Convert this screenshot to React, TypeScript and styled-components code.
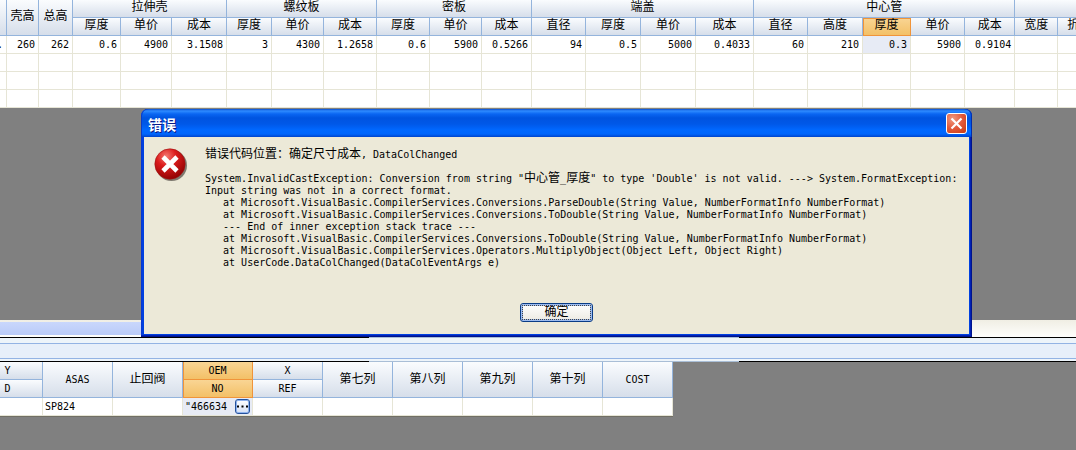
import React from 'react';
import styled, { createGlobalStyle, css } from 'styled-components';

const GlobalStyle = createGlobalStyle`
  * { box-sizing: border-box; }
  html, body { margin: 0; padding: 0; background: #808080; }
  body, button, table {
    font-family: "DejaVu Sans Mono", "Noto Sans CJK SC", monospace;
    font-size: 10px;
    color: #000;
  }
`;

const Page = styled.main`
  position: relative;
  display: flex;
  flex-direction: column;
  min-height: 100vh;
  overflow: hidden;
  background: #808080;
`;

const Han = styled.span`
  font-family: "Noto Sans CJK SC", sans-serif;
  font-size: 12px;
  line-height: 0;
`;

const UpperPane = styled.section`
  height: 320px;
  overflow: hidden;
`;

const Grid = styled.table<{ $shift?: number }>`
  table-layout: fixed;
  width: 0;
  margin-left: ${(p) => p.$shift ?? 0}px;
  border-collapse: separate;
  border-spacing: 0;
`;

const Head = styled.th<{ $active?: boolean; $raised?: boolean }>`
  height: 18px;
  padding: 0 0 ${(p) => (p.$raised ? 1 : 0)}px;
  font-weight: normal;
  line-height: 14px;
  text-align: center;
  white-space: nowrap;
  border-right: 1px solid #94b4dc;
  border-bottom: 1px solid #94b4dc;
  background: linear-gradient(#fafcfe, #d6deea);
  ${(p) =>
    p.$active &&
    css`
      background: linear-gradient(#f9d594, #f3c067);
      border-color: #f0943a;
      box-shadow: inset 1px ${p.$raised ? 1 : 0}px 0 #f0943a;
    `}
`;

const Cell = styled.td<{ $active?: boolean; $left?: boolean }>`
  height: 18px;
  padding: ${(p) => (p.$left ? '0 2px' : '0 3px')};
  line-height: 14px;
  text-align: ${(p) => (p.$left ? 'left' : 'right')};
  white-space: nowrap;
  border-right: 1px solid #e6e5d6;
  border-bottom: 1px solid #e6e5d6;
  background: ${(p) => (p.$active ? '#e7ebf5' : '#fff')};
`;

const CellEditor = styled.div`
  display: flex;
  align-items: center;
  justify-content: space-between;
`;

const MoreButton = styled.button`
  display: flex;
  align-items: center;
  justify-content: center;
  width: 15px;
  height: 15px;
  padding: 0;
  border: 1px solid #24519c;
  border-radius: 3px;
  background: linear-gradient(#fff, #d5e0f5);
  box-shadow: inset 0 0 0 1px #8fb3ee;
`;

const ScrollStrip = styled.div`
  display: flex;
  height: 17px;
  padding: 2px 0;
  background: linear-gradient(#f0eee4, #fefefc);
`;

const ScrollThumb = styled.div`
  width: 300px;
  background: linear-gradient(#c9d7fc, #bacbf8);
`;

const Rule = styled.div`
  height: 1px;
  background: linear-gradient(to right, #000 369px, #a9bed6 369px, #a9bed6 739px, #000 739px);
`;

const Splitter = styled.div`
  height: 23px;
  padding: 5px 0 2px;
  background: #edf4fa;
`;

const SplitterBar = styled.div`
  height: 16px;
  border-top: 1px solid #93b3e4;
  border-bottom: 1px solid #93b3e4;
  background: #e7effa;
`;

const LowerPane = styled.section`
  flex: 1;
  overflow: hidden;

  table {
    border-bottom: 1px solid #716f64;
  }
`;

const Dialog = styled.section`
  position: absolute;
  top: 109px;
  left: 141px;
  right: 104px;
  display: flex;
  flex-direction: column;
  padding: 0 3px 3px;
  border-radius: 7px 7px 0 0;
  background: #0040e0;
  box-shadow: inset -1px -1px 0 #00138c, inset -2px -2px 0 #0021b4, inset 1px 0 0 #0838d0;
`;

const TitleBar = styled.header`
  display: flex;
  align-items: center;
  justify-content: space-between;
  height: 28px;
  margin: 0 -3px;
  padding: 1px 5px 0 7px;
  border-radius: 7px 7px 0 0;
  background: linear-gradient(
    #0a4fd0 0,
    #2e8bff 2px,
    #0a66f2 5px,
    #0054e0 9px,
    #0058e8 15px,
    #0068ff 21px,
    #0066fc 25px,
    #0044cc 28px
  );
  box-shadow: inset 1px 0 0 #0a3cc8, inset -1px 0 0 #002cae;
`;

const Title = styled.h1`
  margin: 0;
  font-family: "Noto Sans CJK SC", sans-serif;
  font-size: 14px;
  font-weight: bold;
  line-height: 20px;
  color: #fff;
  text-shadow: 1px 1px 0 #0a1883;
`;

const CloseButton = styled.button`
  display: flex;
  align-items: center;
  justify-content: center;
  width: 21px;
  height: 21px;
  padding: 0;
  border: 1px solid #fff;
  border-radius: 3px;
  background: radial-gradient(circle at 30% 25%, #f09a80, #e2593a 50%, #c73a12);
`;

const Body = styled.div`
  display: flex;
  flex-direction: column;
  align-items: center;
  height: 197px;
  padding: 11px 10px 12px;
  background: #ece9d8;
`;

const Message = styled.div`
  display: flex;
  flex: 1;
  align-self: stretch;
  gap: 17px;
`;

const Trace = styled.pre`
  margin: 0;
  padding-top: 1px;
  font-family: "DejaVu Sans Mono", "Noto Sans CJK SC", monospace;
  font-size: 10px;
  line-height: 12px;
`;

const OkButton = styled.button`
  width: 73px;
  height: 19px;
  padding: 0;
  border: 1px solid #0a3c86;
  border-radius: 3px;
  background: linear-gradient(#fff, #eceae2);
  box-shadow: inset 0 0 0 2px #9dbcf0, inset 0 -2px 0 #6f98e4;
  line-height: 15px;
  outline: 1px dotted #444;
  outline-offset: -3px;
`;

const hanRun = /([\u3400-\u9fff\uff1a]+)/;

function Label({ text }: { text: string }) {
  return (
    <>
      {text.split(hanRun).map((part, i) => (hanRun.test(part) ? <Han key={i}>{part}</Han> : part))}
    </>
  );
}

const upperColumns = [
  37, 32, 34, 48, 51, 55, 45, 52, 53, 53, 52, 50, 54, 55, 55, 58, 54, 55, 48, 54, 50, 43, 43,
];

const groups = [
  { name: '拉伸壳', columns: ['厚度', '单价', '成本'] },
  { name: '螺纹板', columns: ['厚度', '单价', '成本'] },
  { name: '密板', columns: ['厚度', '单价', '成本'] },
  { name: '端盖', columns: ['直径', '厚度', '单价', '成本'] },
  { name: '中心管', columns: ['直径', '高度', '厚度', '单价', '成本'] },
  { name: '', columns: ['宽度', '折数'] },
];

const upperValues = [
  '.', '260', '262', '0.6', '4900', '3.1508', '3', '4300', '1.2658', '0.6', '5900', '0.5266',
  '94', '0.5', '5000', '0.4033', '60', '210', '0.3', '5900', '0.9104', '', '',
];

const activeColumn = 18;
const firstGroupedColumn = 3;

function CostGrid() {
  const subHeads = groups.flatMap((g) => g.columns);
  const emptyRows = [0, 1, 2];
  return (
    <Grid $shift={-30}>
      <colgroup>
        {upperColumns.map((w, i) => (
          <col key={i} width={w} />
        ))}
      </colgroup>
      <thead>
        <tr>
          <Head rowSpan={2} $raised />
          <Head rowSpan={2} $raised><Label text="壳高" /></Head>
          <Head rowSpan={2} $raised><Label text="总高" /></Head>
          {groups.map((g, i) => (
            <Head key={i} colSpan={g.columns.length} $raised>
              <Label text={g.name} />
            </Head>
          ))}
        </tr>
        <tr>
          {subHeads.map((name, i) => (
            <Head key={i} $raised $active={i + firstGroupedColumn === activeColumn}>
              <Label text={name} />
            </Head>
          ))}
        </tr>
      </thead>
      <tbody>
        <tr>
          {upperValues.map((v, i) => (
            <Cell key={i} $active={i === activeColumn}>{v}</Cell>
          ))}
        </tr>
        {emptyRows.map((r) => (
          <tr key={r}>
            {upperColumns.map((_, i) => (
              <Cell key={i} />
            ))}
          </tr>
        ))}
      </tbody>
    </Grid>
  );
}

const lowerHeads: { top: string; bottom?: string; active?: boolean }[] = [
  { top: 'Y', bottom: 'D' },
  { top: 'ASAS' },
  { top: '止回阀' },
  { top: 'OEM', bottom: 'NO', active: true },
  { top: 'X', bottom: 'REF' },
  { top: '第七列' },
  { top: '第八列' },
  { top: '第九列' },
  { top: '第十列' },
  { top: 'COST' },
];

function PartGrid() {
  return (
    <Grid $shift={-27}>
      <colgroup>
        {lowerHeads.map((_, i) => (
          <col key={i} width={70} />
        ))}
      </colgroup>
      <thead>
        <tr>
          {lowerHeads.map((h) => (
            <Head key={h.top} rowSpan={h.bottom ? 1 : 2} $active={h.active}>
              <Label text={h.top} />
            </Head>
          ))}
        </tr>
        <tr>
          {lowerHeads
            .filter((h) => h.bottom)
            .map((h) => (
              <Head key={h.bottom} $active={h.active}>{h.bottom}</Head>
            ))}
        </tr>
      </thead>
      <tbody>
        <tr>
          {lowerHeads.map((h) => (
            <Cell key={h.top} $left $active={h.active}>
              {h.top === 'ASAS' && 'SP824'}
              {h.active && (
                <CellEditor>
                  "466634
                  <MoreButton type="button" aria-label="More">
                    <svg width="11" height="3" viewBox="0 0 11 3" aria-hidden="true">
                      <path d="M0 .5h2v2H0zM4.500 .5h2v2h-2zM9 .5h2v2H9z" fill="#000" />
                    </svg>
                  </MoreButton>
                </CellEditor>
              )}
            </Cell>
          ))}
        </tr>
      </tbody>
    </Grid>
  );
}

function ErrorIcon() {
  return (
    <svg width="34" height="34" viewBox="0 0 34 34" aria-hidden="true">
      <defs>
        <radialGradient id="ball" cx="0.38" cy="0.25" r="0.8">
          <stop offset="0" stopColor="#f47a72" />
          <stop offset="0.4" stopColor="#dc1c1c" />
          <stop offset="1" stopColor="#8c0000" />
        </radialGradient>
      </defs>
      <circle cx="17.500" cy="17.500" r="15.500" fill="#5a544c" opacity="0.75" />
      <circle cx="16" cy="16" r="15.200" fill="url(#ball)" stroke="#a01414" strokeWidth="0.6" />
      <path d="M9 9l14 14M23 9l-14 14" stroke="#fff" strokeWidth="4.600" />
    </svg>
  );
}

const traceText = `错误代码位置：确定尺寸成本, DataColChanged

System.InvalidCastException: Conversion from string "中心管_厚度" to type 'Double' is not valid. ---> System.FormatException:
Input string was not in a correct format.
   at Microsoft.VisualBasic.CompilerServices.Conversions.ParseDouble(String Value, NumberFormatInfo NumberFormat)
   at Microsoft.VisualBasic.CompilerServices.Conversions.ToDouble(String Value, NumberFormatInfo NumberFormat)
   --- End of inner exception stack trace ---
   at Microsoft.VisualBasic.CompilerServices.Conversions.ToDouble(String Value, NumberFormatInfo NumberFormat)
   at Microsoft.VisualBasic.CompilerServices.Operators.MultiplyObject(Object Left, Object Right)
   at UserCode.DataColChanged(DataColEventArgs e)`;

function ErrorDialog() {
  return (
    <Dialog role="alertdialog" aria-labelledby="dialog-title">
      <TitleBar>
        <Title id="dialog-title">错误</Title>
        <CloseButton type="button" aria-label="Close">
          <svg width="13" height="13" viewBox="0 0 13 13" aria-hidden="true">
            <path d="M1.500 1.500l10 10M11.500 1.500l-10 10" stroke="#fff" strokeWidth="2.200" />
          </svg>
        </CloseButton>
      </TitleBar>
      <Body>
        <Message>
          <ErrorIcon />
          <Trace>
            <Label text={traceText} />
          </Trace>
        </Message>
        <OkButton type="button"><Label text="确定" /></OkButton>
      </Body>
    </Dialog>
  );
}

export default function App() {
  return (
    <>
      <GlobalStyle />
      <Page>
        <UpperPane>
          <CostGrid />
        </UpperPane>
        <ScrollStrip>
          <ScrollThumb />
        </ScrollStrip>
        <Rule />
        <Splitter>
          <SplitterBar />
        </Splitter>
        <Rule />
        <LowerPane>
          <PartGrid />
        </LowerPane>
        <ErrorDialog />
      </Page>
    </>
  );
}
